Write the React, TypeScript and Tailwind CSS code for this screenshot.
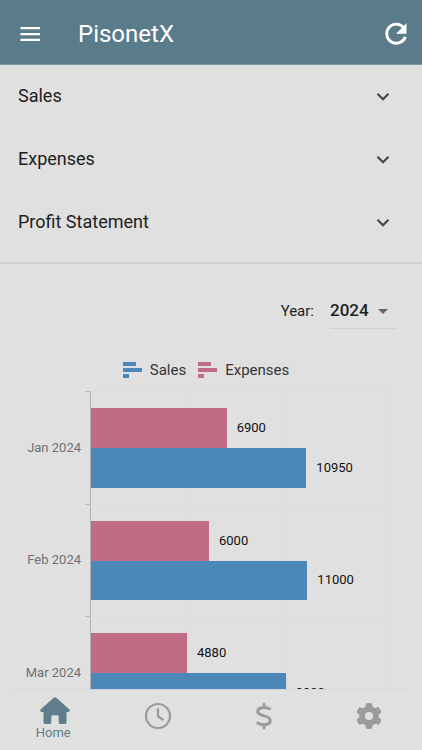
import { useState } from "react";

type Month = { label: string; expenses: number; sales: number };

const MONTHS: Month[] = [
  { label: "Jan 2024", expenses: 6900, sales: 10950 },
  { label: "Feb 2024", expenses: 6000, sales: 11000 },
  { label: "Mar 2024", expenses: 4880, sales: 9900 },
];
const AXIS_MAX = 15000;

const SECTIONS = ["Sales", "Expenses", "Profit Statement"];

function Chevron() {
  return (
    <svg viewBox="0 0 24 24" className="size-6" aria-hidden="true">
      <path d="M6.5 8.8 12 14.3l5.500-5.500" fill="none" stroke="#45474a" strokeWidth="2.200" />
    </svg>
  );
}

function LegendItem({ label, color }: { label: string; color: string }) {
  return (
    <div className="flex items-center gap-2">
      <svg viewBox="0 0 19 16" className="h-4 w-[19px]" fill={color} aria-hidden="true">
        <path d="M0 0h13v4H0zM0 6h19v4H0zM0 12h6v4H0z" />
      </svg>
      <span>{label}</span>
    </div>
  );
}

function Bar({ value, color }: { value: number; color: string }) {
  return (
    <div className="flex min-h-0 flex-1 items-center gap-[10px]">
      <div className={`h-full shrink-0 ${color}`} style={{ width: `${(value / AXIS_MAX) * 100}%` }} />
      <span className="text-[13px] leading-4 text-[#111]">{value}</span>
    </div>
  );
}

function Chart() {
  return (
    <div className="mr-9 grid h-[338px] auto-rows-fr">
      {MONTHS.map((m) => (
        <div key={m.label} className="flex min-h-0">
          <div className="flex w-[85px] items-center justify-end pr-1 text-[13px] text-[#6e7075]">{m.label}</div>
          <div className="w-[5px] border-t border-[#b8b9bb]" />
          <div className="grid flex-1 grid-cols-3 border-t border-l border-t-[#dcdcde] border-l-[#b0b1b3]">
            <div className="col-start-1 row-start-1 border-r border-[#dcdcde]" />
            <div className="col-start-2 row-start-1 border-r border-[#dcdcde]" />
            <div className="col-start-3 row-start-1 border-r border-[#dcdcde]" />
            <div className="col-span-3 col-start-1 row-start-1 flex flex-col py-4">
              <Bar value={m.expenses} color="bg-[#c06c84]" />
              <Bar value={m.sales} color="bg-[#4b87b9]" />
            </div>
          </div>
        </div>
      ))}
    </div>
  );
}

export default function App() {
  const [year, setYear] = useState("2024");
  const [open, setOpen] = useState("");

  return (
    <div className="flex h-screen flex-col bg-[#e0e0e0] font-[Roboto,sans-serif] text-[#1d1e21]">
      <header className="flex h-[65px] shrink-0 items-center border-b border-[#8599a3] bg-[#5a7b8a] pt-1 pr-3 pl-[18px] text-white">
        <button type="button" aria-label="Menu" className="size-6">
          <svg viewBox="0 0 24 24" className="size-6" fill="currentColor" aria-hidden="true">
            <path d="M2.500 5h19.500v2.300H2.500zM2.500 10.900h19.500v2.300H2.500zM2.500 16.800h19.500v2.300H2.500z" />
          </svg>
        </button>
        <h1 className="ml-9 flex-1 text-2xl">PisonetX</h1>
        <button type="button" aria-label="Refresh" className="size-7">
          <svg viewBox="0 0 24 24" className="size-7" fill="none" aria-hidden="true">
            <path d="M18.800 6.800A8.200 8.200 0 1 0 20 14.300" stroke="currentColor" strokeWidth="2.400" />
            <path d="M21 2.800v9h-9z" fill="currentColor" />
          </svg>
        </button>
      </header>

      <main className="min-h-0 flex-1 overflow-y-auto [scrollbar-width:none]">
        <section className="border-b-2 border-[#cfd0d3]">
          {SECTIONS.map((name) => (
            <h2 key={name}>
              <button
                type="button"
                aria-expanded={open === name}
                onClick={() => setOpen(open === name ? "" : name)}
                className="flex h-[63px] w-full items-center justify-between pr-[27px] pl-[18px] text-lg"
              >
                <span className="pb-0.5">{name}</span>
                <Chevron />
              </button>
            </h2>
          ))}
          <div className="h-2" />
        </section>

        <div className="mt-7 flex items-center justify-end gap-4 pr-[26px]">
          <label htmlFor="year" className="pt-0.5 text-[15px]">
            Year:
          </label>
          <div className="grid w-[66px] items-center border-b border-[#cfcfd1]">
            <select
              id="year"
              value={year}
              onChange={(e) => setYear(e.target.value)}
              className="col-start-1 row-start-1 h-9 appearance-none bg-transparent pt-0.5 text-[17px] font-medium"
            >
              <option>2024</option>
              <option>2023</option>
            </select>
            <svg
              viewBox="0 0 10 5"
              className="pointer-events-none col-start-1 row-start-1 mt-0.5 mr-2 h-[5px] w-[10px] justify-self-end"
              aria-hidden="true"
            >
              <path d="M0 0h10L5 5z" fill="#666" />
            </svg>
          </div>
        </div>

        <div className="mt-[31px] mb-[11px] flex h-5 items-center justify-center gap-3 pr-[10px] text-[15px] text-[#333539]">
          <LegendItem label="Sales" color="#4b87b9" />
          <LegendItem label="Expenses" color="#c06c84" />
        </div>
        <Chart />
      </main>

      <nav className="mx-[14px] grid h-[61px] shrink-0 grid-cols-4 border-t border-[#d2d7df] text-[#9b9b9b]">
        <a
          href="#home"
          className="flex flex-col items-center pt-[7px] pr-5 text-[13px] leading-4 text-[#5f7d8b]"
        >
          <svg viewBox="0 0 30 28" className="ml-1 h-7 w-[30px]" fill="currentColor" aria-hidden="true">
            <path d="M13.700.8a2 2 0 0 1 2.600 0L29.200 12.300c1.100 1 .6 2.700-.9 2.700H26.500v10.500a1.600 1.600 0 0 1-1.600 1.600H20.300a1.600 1.600 0 0 1-1.600-1.600V19.500a1.300 1.300 0 0 0-1.300-1.300h-4.800a1.300 1.300 0 0 0-1.300 1.300v6a1.600 1.600 0 0 1-1.600 1.600H5.100a1.600 1.600 0 0 1-1.600-1.600V15H1.700C.2 15-.3 13.300.8 12.300z" />
          </svg>
          Home
        </a>
        <a href="#history" aria-label="History" className="flex items-center justify-center pr-2 pb-2">
          <svg viewBox="0 0 28 28" className="size-7" fill="none" stroke="currentColor" aria-hidden="true">
            <circle cx="14" cy="14" r="12" strokeWidth="2.200" />
            <path d="M14 7v7.500l4.800 3" strokeWidth="2.200" strokeLinecap="round" strokeLinejoin="round" />
          </svg>
        </a>
        <a href="#sales" aria-label="Sales" className="flex items-center justify-center pb-2 pl-2">
          <svg viewBox="0 0 18 28" className="h-7 w-[18px]" fill="none" stroke="currentColor" aria-hidden="true">
            <path
              d="M9 2v3.200M9 22.800V26M14.500 6.700C10 5.200 3 4.500 2.700 9.500 2.500 14.800 15 12.500 15.200 18.500 15.300 23.700 7 23.300 2.700 21.100"
              strokeWidth="3"
              strokeLinecap="round"
              strokeLinejoin="round"
            />
          </svg>
        </a>
        <a href="#settings" aria-label="Settings" className="flex items-center justify-center pb-2 pl-5">
          <svg viewBox="0 0 512 512" className="size-[26px]" fill="currentColor" aria-hidden="true">
            <path d="M495.900 166.600c3.200 8.700.5 18.400-6.400 24.600l-43.300 39.400c1.100 8.300 1.700 16.800 1.700 25.400s-.6 17.100-1.700 25.400l43.300 39.400c6.900 6.200 9.600 15.900 6.400 24.600-4.400 11.900-9.700 23.300-15.800 34.300l-4.700 8.100c-6.600 11-14 21.400-22.100 31.200-5.900 7.200-15.700 9.600-24.500 6.800l-55.700-17.700c-13.400 10.300-28.200 18.900-44 25.400l-12.500 57.100c-2 9.100-9 16.300-18.200 17.800-13.800 2.300-28 3.500-42.500 3.500s-28.700-1.200-42.500-3.500c-9.200-1.500-16.200-8.700-18.200-17.800l-12.500-57.100c-15.800-6.500-30.600-15.100-44-25.400l-55.700 17.700c-8.800 2.800-18.600.3-24.500-6.800-8.100-9.800-15.500-20.200-22.100-31.200l-4.700-8.100c-6.100-11-11.400-22.400-15.800-34.300-3.200-8.700-.5-18.400 6.400-24.600l43.300-39.400c-1.100-8.300-1.700-16.800-1.700-25.400s.6-17.100 1.700-25.400L22.500 191.200c-6.900-6.200-9.600-15.900-6.400-24.600 4.400-11.900 9.700-23.300 15.800-34.300l4.700-8.100c6.600-11 14-21.400 22.100-31.200 5.900-7.200 15.700-9.600 24.500-6.800l55.700 17.700c13.400-10.300 28.200-18.900 44-25.400L195.400 21.400c2-9.100 9-16.300 18.200-17.800C227.400 1.200 241.500 0 256 0s28.700 1.200 42.500 3.500c9.200 1.500 16.200 8.700 18.200 17.800l12.500 57.100c15.800 6.500 30.600 15.100 44 25.400l55.700-17.700c8.800-2.800 18.600-.3 24.500 6.800 8.100 9.800 15.500 20.200 22.100 31.200l4.700 8.100c6.100 11 11.400 22.400 15.800 34.300zM256 336a80 80 0 1 0 0-160 80 80 0 1 0 0 160z" />
          </svg>
        </a>
      </nav>
    </div>
  );
}
